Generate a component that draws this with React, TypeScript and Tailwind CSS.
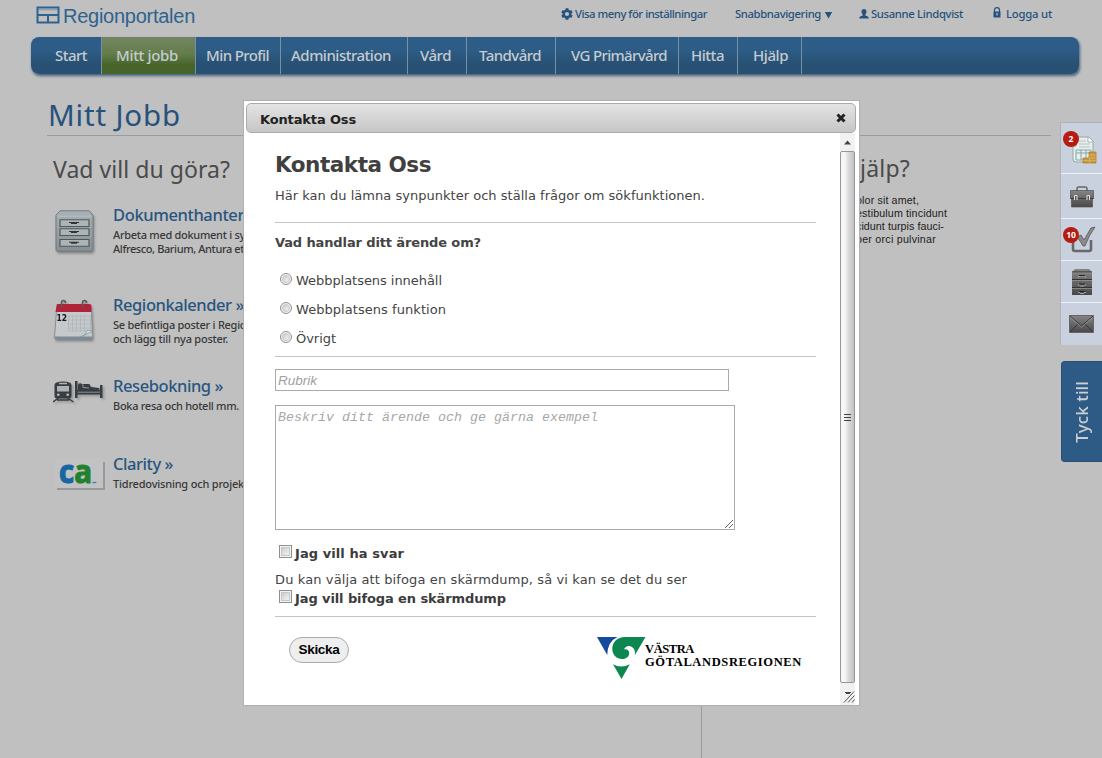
import { useLayoutEffect, useRef, useState } from "react";

/** One line of text whose tracking is adjusted so that it fills the width of its box. */
function Fit({ text, className = "" }: { text: string; className?: string }) {
  const box = useRef<HTMLSpanElement>(null);
  const inner = useRef<HTMLSpanElement>(null);
  const [tracking, setTracking] = useState(0);
  useLayoutEffect(() => {
    if (!box.current || !inner.current) return;
    const free = box.current.offsetWidth - inner.current.getBoundingClientRect().width;
    setTracking(free / text.length);
  }, [text]);
  return (
    <span ref={box} className={`block shrink-0 whitespace-nowrap ${className}`}>
      <span ref={inner} style={{ letterSpacing: `${tracking}px` }}>
        {text}
      </span>
    </span>
  );
}

const navItems = [
  { label: "Start", cell: "w-[71px] pl-[24px]", text: "w-[32px]" },
  { label: "Mitt jobb", cell: "w-[94px] pl-[14px] bg-linear-to-b from-[#71845f] from-10% via-[#647d4a] via-45% to-[#47652b] to-75%", text: "w-[62px]" },
  { label: "Min Profil", cell: "w-[85px] pl-[10px]", text: "w-[63px]" },
  { label: "Administration", cell: "w-[127px] pl-[10px]", text: "w-[100px]" },
  { label: "Vård", cell: "w-[59px] pl-[12px]", text: "w-[31px]" },
  { label: "Tandvård", cell: "w-[89px] pl-[12px]", text: "w-[62px]" },
  { label: "VG Primärvård", cell: "w-[123px] pl-[15px]", text: "w-[96px]" },
  { label: "Hitta", cell: "w-[59px] pl-[12px]", text: "w-[33px]" },
  { label: "Hjälp", cell: "w-[64px] pl-[15px]", text: "w-[35px]" },
];

function CabinetIcon() {
  return (
    <svg className="ml-[2px] drop-shadow-[1px_2px_1px_#888]" width="39" height="44" viewBox="0 0 39 49" preserveAspectRatio="none">
      <defs>
        <linearGradient id="cab" x1="0" y1="0" x2="0" y2="1">
          <stop offset="0" stopColor="#a9b2b6" />
          <stop offset="1" stopColor="#858f95" />
        </linearGradient>
      </defs>
      <path d="M5 2h29l4 5v38q0 2-2 2H3q-2 0-2-2V7z" fill="url(#cab)" stroke="#6d777c" />
      <path d="M2 8h35" stroke="#bbc2c5" />
      {[12, 22, 34].map((y) => (
        <g key={y}>
          <path d={`M5 ${y}h29v7.500H5z`} fill="#aeb4b6" stroke="#51585b" strokeWidth="1.200" />
          <path d={`M14 ${y + 3}h10M16 ${y + 4}h6`} stroke="#303638" strokeWidth="1.200" />
        </g>
      ))}
    </svg>
  );
}

function CalendarIcon() {
  return (
    <svg className="drop-shadow-[1px_2px_1px_#888]" width="42" height="43" viewBox="0 0 41 43">
      <path d="M3 12h35l1 26q0 2-2 2H3q-2 0-2-2z" fill="#c6c9cb" stroke="#7c8589" strokeWidth=".8" />
      <path d="M1.500 37.500h37.500v2.800h-37.500z" fill="#7c8c96" />
      <path d="M4 5h32q2 0 2 2v6H2l1-6q0-2 1-2z" fill="#b0243a" />
      <path d="M15 17h22v15H15zM19 17v15M23 17v15M27 17v15M31 17v15M15 21h22M15 25h22M15 29h22" fill="none" stroke="#a9b2b8" strokeWidth=".7" />
      <path d="M27 38q5-1 7-7l5 1z" fill="#dfe4e7" stroke="#7f97a6" strokeWidth=".8" />
      <path d="M8 8.500V4q0-2.500 2-2.500T12 4M29 8.500V4q0-2.500 2-2.500T33 4" fill="none" stroke="#555c60" strokeWidth="1.600" />
      <text x="3" y="21.500" fontSize="8" fontWeight="700" fontFamily="DejaVu Sans, sans-serif" textLength="10.500" lengthAdjust="spacingAndGlyphs" fill="#151515">12</text>
    </svg>
  );
}

function TravelIcon() {
  return (
    <svg className="drop-shadow-[2px_2px_1px_#999]" width="52" height="26" viewBox="0 0 52 26">
      <path d="M1.500 5q0-3.500 8.500-3.500T18.500 5v11q0 2.500-3 2.500h-11q-3 0-3-2.500z" fill="#373d40" />
      <path d="M6 2.800h8v1.400H6zM4 6h12v5.500H4z" fill="#aeb2b4" />
      <circle cx="5.300" cy="14.800" r="1.300" fill="#c0c0c0" />
      <circle cx="14.700" cy="14.800" r="1.300" fill="#c0c0c0" />
      <path d="M5.500 18L0 22M14.500 18l6 4M4 20h12" stroke="#373d40" strokeWidth="1.500" />
      <path d="M22 1h2.500v9H47V5h2.500v13H47v-3.500H24.500V18H22z" fill="#373d40" />
      <path d="M25 5.500a2.200 2.200 0 1 1 4.400 0v-1.500h7l1.500 3 8.500 1v2.500H25z" fill="#373d40" />
      <path d="M30 4.500v3l6 .5" fill="none" stroke="#a8abad" strokeWidth=".8" />
      <path d="M24.500 12.200H47" stroke="#899093" strokeWidth="1" />
    </svg>
  );
}

function CaIcon() {
  return (
    <svg className="-mt-[10px] ml-[2px]" width="54" height="50" viewBox="0 0 54 50">
      <path d="M2 14h48v28H2z" fill="#8e8e8e" opacity=".8" />
      <path d="M0 10h48v30H0z" fill="#c1c2c3" />
      <text x="4" y="35" fontSize="33" fontWeight="700" fontFamily="Open Sans, sans-serif" stroke="#1768a0" fill="#1768a0" strokeWidth="1.200" textLength="33" lengthAdjust="spacingAndGlyphs">
        c<tspan fill="#23812e" stroke="#23812e">a</tspan>
      </text>
      <path d="M37.500 34.500h4" stroke="#3d7da8" strokeWidth="1.200" />
    </svg>
  );
}

const tasks = [
  { icon: <CabinetIcon />, title: "Dokumenthanter", tw: "w-[131px]", row: "h-[90px]", lines: [["Arbeta med dokument i sy", "w-[132px]"], ["Alfresco, Barium, Antura et", "w-[131px]"]] },
  { icon: <CalendarIcon />, title: "Regionkalender »", tw: "w-[131px]", row: "h-[81px]", lines: [["Se befintliga poster i Regic", "w-[132px]"], ["och lägg till nya poster.", "w-[115px]"]] },
  { icon: <TravelIcon />, title: "Resebokning »", tw: "w-[110px]", row: "h-[78px]", lines: [["Boka resa och hotell mm.", "w-[126px]"]] },
  { icon: <CaIcon />, title: "Clarity »", tw: "w-[60px]", row: "h-[60px]", lines: [["Tidredovisning och projek", "w-[131px]"]] },
];

function Header() {
  return (
    <header className="flex h-[37px] items-start text-[11.300px] leading-[16px] font-medium text-[#26527c]">
      <svg className="ml-[36px] mt-[6px] shrink-0" width="24" height="18" viewBox="0 0 24 18">
        <path d="M1.500 1.500h21v15h-21zM1 9h22M12 9v8" fill="none" stroke="#2e6390" strokeWidth="2" />
        <path d="M3 3.800h18" stroke="#7b95ac" strokeWidth="1" />
      </svg>
      <Fit text="Regionportalen" className="ml-[3px] mt-[4px] w-[132px] font-['Liberation_Sans',sans-serif] text-[20px] leading-[24px] font-normal text-[#2e6390]" />
      <svg className="ml-[366px] mt-[8px] shrink-0" width="12" height="12" viewBox="0 0 12 12">
        <path d="M6 .3v11.400M1 3.200l10 5.600M11 3.200L1 8.800" stroke="#26527c" strokeWidth="3" />
        <circle cx="6" cy="6" r="3.300" fill="#c0c0c0" stroke="#26527c" strokeWidth="2.400" />
      </svg>
      <Fit text="Visa meny för inställningar" className="ml-[2px] mt-[6px] w-[132px]" />
      <Fit text="Snabbnavigering" className="ml-[28px] mt-[6px] w-[86px]" />
      <svg className="ml-[3px] mt-[11px] shrink-0" width="9" height="8" viewBox="0 0 9 8">
        <path d="M.8 1h7.400L4.500 7.500z" fill="#26527c" />
      </svg>
      <svg className="ml-[26px] mt-[9px] shrink-0" width="10" height="10" viewBox="0 0 10 10">
        <path d="M5 0q2.500 0 2.500 2.800Q7.300 5 6.300 5.600v.8q3.500.6 3.500 3.100H.2q0-2.500 3.500-3.100v-.8Q2.700 5 2.500 2.800 2.500 0 5 0z" fill="#26527c" />
      </svg>
      <Fit text="Susanne Lindqvist" className="ml-[2px] mt-[6px] w-[92px]" />
      <svg className="ml-[30px] mt-[7px] shrink-0" width="8" height="11" viewBox="0 0 8 11">
        <path d="M1.500 5V3q0-2.300 2.500-2.300T6.500 3v2" fill="none" stroke="#26527c" strokeWidth="1.200" />
        <path d="M.5 4.500h7v6h-7z" fill="#26527c" />
        <path d="M4 6v2.500" stroke="#b4bdc6" strokeWidth="1.300" />
      </svg>
      <Fit text="Logga ut" className="ml-[5px] mt-[6px] w-[46px]" />
    </header>
  );
}

function Rule({ className = "" }: { className?: string }) {
  return <div className={`h-px w-[541px] shrink-0 bg-[#c4c4c4] ${className}`} />;
}

function RadioRow({ text, width }: { text: string; width: string }) {
  return (
    <label className="flex h-[29px] items-center pl-[5px]">
      <span className="mt-[-3px] flex size-[12px] items-center justify-center rounded-full border border-[#8e8f8f] bg-[#f4f4f4]">
        <span className="size-[8px] rounded-full border border-[#c4c8cb] bg-linear-to-br from-[#c8ccd0] to-[#f4f4f4]" />
      </span>
      <Fit text={text} className={`ml-[4px] ${width}`} />
    </label>
  );
}

function CheckRow({ text, width }: { text: string; width: string }) {
  return (
    <label className="flex h-[18px] items-center pl-[4px] font-bold text-[#3c3c3c]">
      <span className="mt-[-3px] flex size-[13px] items-center justify-center border border-[#8e8f8f] bg-[#f4f4f4]">
        <span className="size-[9px] border border-[#c4c8cb] bg-linear-to-br from-[#c8ccd0] to-[#f4f4f4]" />
      </span>
      <Fit text={text} className={`mt-[2px] ml-[3px] ${width}`} />
    </label>
  );
}

function RegionLogo() {
  return (
    <div className="flex">
      <svg className="shrink-0" width="49" height="42" viewBox="0 0 49 42">
        <path d="M0 0h20.500Q10.500 4.500 10.200 18z" fill="#164a9c" />
        <path d="M48.500 0H28C20 0 15.300 5.500 15.300 11.800c0 6.300 4.500 10.200 9.500 10.200 5.300 0 7.800-3.600 7.400-6.300-.3-2.600-2.700-3.800-5.200-3.200 1.200-3.200 4.600-4.300 7.600-2.800 3 1.600 3.800 4.600 3.200 8.600z" fill="#0d8650" />
        <path d="M16 27.200q8.300 4.800 16.800 0L24.500 42z" fill="#0d8650" />
      </svg>
      <div className="mt-[6px] -ml-px font-['Liberation_Serif',serif] text-[12.500px] leading-[13px] font-bold text-black">
        <Fit text="VÄSTRA" className="w-[49px]" />
        <Fit text="GÖTALANDSREGIONEN" className="w-[157px]" />
      </div>
    </div>
  );
}

function Scrollbar() {
  return (
    <div className="-ml-px flex w-[15px] shrink-0 flex-col bg-[#f1f1f1]">
      <svg width="15" height="18" viewBox="0 0 15 18">
        <path d="M4 11.500L7.500 7.500l3.500 4z" fill="#444" />
      </svg>
      <div className="flex h-[532px] flex-col items-center justify-center gap-[2px] rounded-[2px] border border-[#979797] bg-linear-to-r from-[#f6f6f6] from-30% via-[#dcdcdf] via-55% to-[#c2c2c4]">
        <span className="h-px w-[7px] bg-[#444]" />
        <span className="h-px w-[7px] bg-[#444]" />
        <span className="h-px w-[7px] bg-[#444]" />
      </div>
      <svg className="mt-[7px]" width="15" height="14" viewBox="0 0 15 14">
        <path d="M5 2.500h6M6 3.500h4" stroke="#444" />
        <path d="M4 12.500L14 1.500M8 12.500l6.500-7M12 12.500l2.500-3" stroke="#555" />
      </svg>
    </div>
  );
}

function ContactDialog() {
  return (
    <div className="absolute top-[100px] left-[243px] flex h-[606px] w-[617px] flex-col border border-[#b0b0b0] bg-white pt-[2px] pr-[3px] pl-[2px] font-['DejaVu_Sans',Verdana,sans-serif] text-[13px] text-[#444]">
      <div className="flex h-[30px] shrink-0 items-center justify-between rounded-[5px] border border-[#aaa] bg-linear-to-b from-[#e4e4e4] to-[#c6c6c6] pr-[9px] pl-[13px] font-bold text-[#222]">
        <Fit text="Kontakta Oss" className="mt-[3px] w-[96px]" />
        <svg width="10" height="10" viewBox="0 0 10 10">
          <path d="M1.500 1.500l7 7M8.500 1.500l-7 7" stroke="#222" strokeWidth="3" />
        </svg>
      </div>
      <div className="flex grow">
        <form className="flex w-[595px] shrink-0 flex-col pl-[29px]">
          <Fit text="Kontakta Oss" className="mt-[17px] w-[156px] text-[21.500px] leading-[30px] font-bold text-[#404040]" />
          <Fit text="Här kan du lämna synpunkter och ställa frågor om sökfunktionen." className="mt-[7px] w-[430px] leading-[18px]" />
          <Rule className="mt-[17px]" />
          <Fit text="Vad handlar ditt ärende om?" className="mt-[11px] w-[206px] leading-[18px] font-bold" />
          <div className="mt-[14px]">
            <RadioRow text="Webbplatsens innehåll" width="w-[146px]" />
            <RadioRow text="Webbplatsens funktion" width="w-[150px]" />
            <RadioRow text="Övrigt" width="w-[40px]" />
          </div>
          <Rule className="mt-[3px]" />
          <input placeholder="Rubrik" className="mt-[12px] h-[22px] w-[454px] shrink-0 border border-[#aaa] px-[2px] font-['Liberation_Sans',sans-serif] text-[13.500px] italic placeholder:text-[#a0a0a0]" />
          <div className="relative mt-[14px] h-[125px] w-[460px] shrink-0">
            <textarea placeholder="Beskriv ditt ärende och ge gärna exempel" className="block h-full w-full resize-none border border-[#aaa] px-[2px] py-[4px] font-['Liberation_Mono',monospace] text-[13.333px] leading-[15px] italic placeholder:text-[#a8a8a8]" />
            <svg className="absolute right-[2px] bottom-[2px]" width="8" height="8" viewBox="0 0 8 8">
              <path d="M0 8L8 0M4 8l4-4" stroke="#666" />
            </svg>
          </div>
          <div className="mt-[14px]">
            <CheckRow text="Jag vill ha svar" width="w-[109px]" />
          </div>
          <Fit text="Du kan välja att bifoga en skärmdump, så vi kan se det du ser" className="mt-[8px] w-[412px] leading-[19px]" />
          <CheckRow text="Jag vill bifoga en skärmdump" width="w-[211px]" />
          <Rule className="mt-[9px]" />
          <div className="mt-[20px] flex items-start pl-[14px]">
            <button type="button" className="flex h-[26px] w-[60px] items-center justify-center rounded-full border border-[#aaa] bg-[#eee] font-['Liberation_Sans',sans-serif] text-[13.500px] font-bold text-black">
              <Fit text="Skicka" className="w-[41px]" />
            </button>
            <div className="ml-[248px]">
              <RegionLogo />
            </div>
          </div>
        </form>
        <Scrollbar />
      </div>
    </div>
  );
}

function Badge({ text }: { text: string }) {
  return (
    <span className="absolute top-[8px] left-[2px] flex size-[16px] items-center justify-center rounded-full bg-[#b51d14] font-['Open_Sans',sans-serif] text-[8.500px] font-bold text-white">
      {text}
    </span>
  );
}

function SideTools() {
  const cell = "relative flex items-center justify-center border-b border-[#eef1f5]";
  return (
    <aside className="absolute top-[122px] left-[1060px] w-[42px]">
      <svg width="0" height="0" className="absolute">
        <defs>
          <linearGradient id="metal" x1="0" y1="0" x2="0" y2="1">
            <stop offset="0" stopColor="#858585" />
            <stop offset="1" stopColor="#484848" />
          </linearGradient>
        </defs>
      </svg>
      <div className="border-t border-l border-[#aeb2b9] bg-[#c9d1df]">
        <div className={`${cell} h-[51px]`}>
          <svg className="mt-[5px] ml-[6px]" width="26" height="30" viewBox="0 0 26 30">
            <path d="M4 1h13l4 4v21H4q-3 0-3-3V10h3z" fill="#e7eeeb" stroke="#98a9a6" />
            <path d="M16 1v5h5" fill="#fff" stroke="#a5b1af" />
            <path d="M7 5h7M7 8h11M7 11h11" stroke="#b6c2c1" />
            <path d="M4 14h15v10H4zM4 17h15M9 14v10M14 14v10" fill="none" stroke="#81a7a7" />
            <path d="M17 16h7v11H11v-5h6z" fill="#c9993f" stroke="#a57527" strokeWidth=".7" />
            <path d="M17 19h7M11 24.500h13M17 22h7M17.500 22v5" stroke="#dcb860" strokeWidth=".8" />
          </svg>
          <Badge text="2" />
        </div>
        <div className={`${cell} h-[45px]`}>
          <svg className="mt-px" width="26" height="22" viewBox="0 0 26 22">
            <path d="M8 5V3q0-2 2-2h6q2 0 2 2v2" fill="none" stroke="#666" strokeWidth="1.500" />
            <path d="M1.500 4.500h23v8h-1v8.500h-21v-8.500h-1z" fill="url(#metal)" stroke="#505050" strokeWidth=".7" />
            <path d="M1.500 12.500h4M8.500 12.500h9M20.500 12.500h4" stroke="#3e3e3e" />
            <path d="M5.500 14v-4.500h2.500v4.500M18 14v-4.500h2.500v4.500" fill="#555" stroke="#e4e4e4" />
          </svg>
        </div>
        <div className={`${cell} h-[42px]`}>
          <svg className="ml-[3px]" width="26" height="28" viewBox="0 0 26 28">
            <path d="M3 9v14q0 2 2 2h14q2 0 2-2v-9" fill="none" stroke="#686868" strokeWidth="2.600" />
            <path d="M7 11l4-2 3 5 7-12 4-1q-6 8-10 19h-2q-2-4-6-9z" fill="#8b8b8b" stroke="#555" strokeWidth=".8" />
          </svg>
          <Badge text="10" />
        </div>
        <div className={`${cell} h-[42px]`}>
          <svg width="22" height="28" viewBox="0 0 22 28">
            <path d="M1 4l3-3h14l3 3v23H1z" fill="url(#metal)" />
            <path d="M1 4h20M1 11.500h20M1 19.500h20" stroke="#333" />
            <path d="M1 5h20M1 12.500h20M1 20.500h20" stroke="#999" strokeWidth=".7" />
            <path d="M7 9.500l2-1.500h4l2 1.500M7 17h2M13 17h2M9 18h4M7 24.500h2M13 24.500h2M9 25.500h4" fill="none" stroke="#bbb" strokeWidth=".8" />
            <path d="M8 7.500h6M8 16h6M8 23.500h6" fill="none" stroke="#222" />
          </svg>
        </div>
        <div className="flex h-[42px] items-center justify-center">
          <svg width="25" height="18" viewBox="0 0 25 18">
            <path d="M.5.500h24v17H.5z" fill="url(#metal)" stroke="#666" />
            <path d="M1 1l11.500 10L24 1M1 17l8.500-8.500M24 17l-8.500-8.500" fill="none" stroke="#333" strokeWidth=".9" />
            <path d="M1 2.200l11.500 10L24 2.200" fill="none" stroke="#aaa" strokeWidth=".6" />
          </svg>
        </div>
      </div>
      <div className="mt-[16px] ml-px flex h-[101px] items-center justify-center rounded-l-[4px] border border-r-0 border-[#284f74] bg-[#2d5b86]">
        <span className="flex rotate-180 [writing-mode:vertical-rl]">
          <span className="font-['Noto_Sans',sans-serif] text-[17px] leading-[22px] font-medium tracking-[0.1px] text-[#cbcfd3]">Tyck till</span>
        </span>
      </div>
    </aside>
  );
}

export default function App() {
  return (
    <div className="relative h-[758px] w-[1102px] overflow-hidden bg-[#c0c0c0] font-['Noto_Sans',sans-serif]">
      <Header />
      <nav className="ml-[31px] flex h-[37px] w-[1048px] overflow-visible rounded-[8px] bg-linear-to-b from-[#2d5c86] from-35% to-[#285072] to-75% text-[15px] leading-[37px] font-medium text-[#c5cbd0] shadow-[1px_2px_3px_#44607c]">
        {navItems.map((item) => (
          <div key={item.label} className={`shrink-0 border-r border-[#7890a5] ${item.cell}`}>
            <Fit text={item.label} className={item.text} />
          </div>
        ))}
      </nav>
      <main className="ml-[47px] w-[1004px]">
        <div className="h-[62px] border-b border-[#999da1] pt-[21px]">
          <Fit text="Mitt Jobb" className="ml-px w-[133px] text-[29.500px] leading-[40px] text-[#26527c]" />
        </div>
        <div className="flex h-[622px]">
          <section className="h-full w-[655px] shrink-0 border-r border-[#999da1] pl-[6px]">
            <Fit text="Vad vill du göra?" className="mt-[16px] w-[177px] text-[23px] leading-[34px] text-[#4a4a4a]" />
            <div className="mt-[19px]">
              {tasks.map((task) => (
                <div key={task.title} className={`flex ${task.row}`}>
                  <div className="w-[60px] shrink-0 pt-[4px]">{task.icon}</div>
                  <div className="text-[11px] leading-[13.500px] font-medium text-[#383838]">
                    <Fit text={task.title} className={`mb-[3px] text-[16.500px] leading-[20px] text-[#285580] ${task.tw}`} />
                    {task.lines.map(([line, width]) => (
                      <Fit key={line} text={line} className={width} />
                    ))}
                  </div>
                </div>
              ))}
            </div>
          </section>
          <section className="pl-[158px]">
            <Fit text="jälp?" className="mt-[15px] w-[50px] text-[23px] leading-[34px] text-[#4a4a4a]" />
            <div className="mt-[9px] -ml-[4px] font-['Liberation_Sans',sans-serif] text-[10.700px] leading-[13px] text-[#222]">
              <Fit text="olor sit amet," className="w-[63px]" />
              <Fit text="estibulum tincidunt" className="w-[91px]" />
              <Fit text="cidunt turpis fauci-" className="w-[88px]" />
              <Fit text="per orci pulvinar" className="w-[80px]" />
            </div>
          </section>
        </div>
      </main>
      <SideTools />
      <ContactDialog />
    </div>
  );
}
